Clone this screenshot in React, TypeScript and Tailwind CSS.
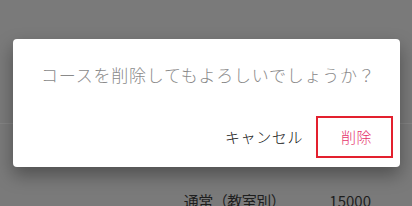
import React from 'react';

const jp = { fontFamily: '"Noto Sans CJK JP", "Noto Sans", sans-serif' };

export default function App() {
  return (
    <div className="relative w-[412px] h-[206px] overflow-hidden bg-[#7a7a7a]" style={jp}>
      {/* dimmed page underneath */}
      <div className="flex flex-col">
        <div className="h-[123px]" />
        <div className="h-px bg-[#848484]" />
        <div className="flex justify-end items-center pr-[41px] pt-[66px] gap-[44px] text-[15px] leading-[22px] text-[#1e1e1e]">
          <span className="tracking-[-0.5px]">通常（教室別）</span>
          <span>15000</span>
        </div>
      </div>

      {/* dialog */}
      <div className="absolute left-[13px] top-[39px] w-[387px] h-[128px] bg-white rounded-[4px] shadow-[0_8px_18px_rgba(0,0,0,0.35)] flex flex-col">
        <p className="pl-[28px] pt-[23px] text-[17px] leading-[26px] tracking-[0.75px] font-light text-[#8a8a8a]">
          コースを削除してもよろしいでしょうか？
        </p>
        <div className="mt-auto mb-[9px] flex justify-end items-center gap-[5px] pr-[7px]">
          <button className="h-[42px] px-[8px] text-[15px] tracking-[0.6px] font-light text-[#111]">キャンセル</button>
          <button className="w-[77px] h-[42px] border-2 border-[#e3202e] pl-[4px] text-[15px] tracking-[0.5px] font-light text-[#e5336b]">
            削除
          </button>
        </div>
      </div>
    </div>
  );
}
